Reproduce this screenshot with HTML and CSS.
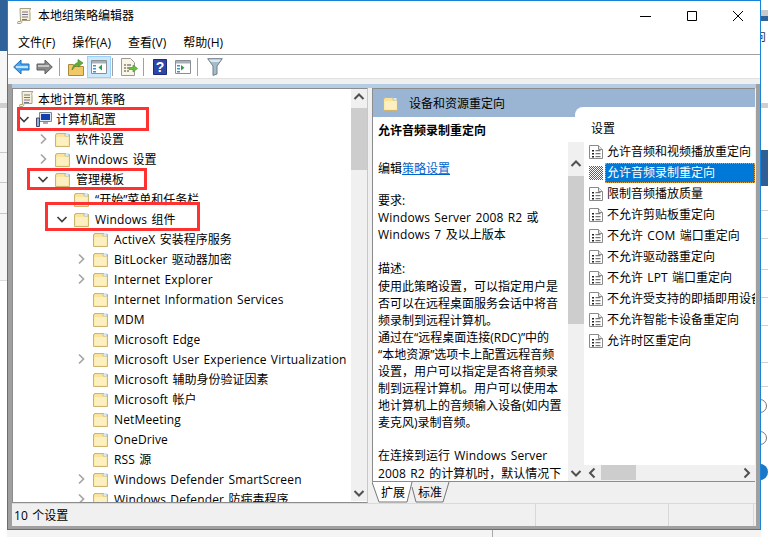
FILE: index.html
```html
<!DOCTYPE html>
<html lang="zh-CN">
<head>
<meta charset="utf-8">
<title>本地组策略编辑器</title>
<link rel="stylesheet" href="styles.css">
</head>
<body>
<svg class="defs" width="0" height="0" aria-hidden="true">
  <defs>
    <pattern id="dither" width="2" height="2" patternUnits="userSpaceOnUse">
      <rect width="2" height="2" fill="#fff"/>
      <rect width="1" height="1" fill="#0078d7"/>
      <rect x="1" y="1" width="1" height="1" fill="#0078d7"/>
    </pattern>
    <symbol id="folder" viewBox="0 0 15 15">
      <path d="M.5 2.500h1v-1h9l1 1h3v12H.5z" fill="#fbe39a" stroke="#cdb56f"/>
      <path d="M1.500 5h12v8.500h-12z" fill="#fdf0c0"/>
      <path d="M10 2h4v2h-4z" fill="#fff" stroke="#7fb0d6" stroke-width=".6"/>
    </symbol>
    <symbol id="open" viewBox="0 0 12 12"><path d="M1.500 4 6 8.500 10.500 4" fill="none" stroke="#404040" stroke-width="1.700"/></symbol>
    <symbol id="closed" viewBox="0 0 12 12"><path d="M4 1.500 8.500 6 4 10.500" fill="none" stroke="#a6a6a6" stroke-width="1.700"/></symbol>
    <symbol id="page" viewBox="0 0 14 14">
      <path d="M.5.500h9l4 4v9H.5z" fill="#fff" stroke="#8a8a8a"/>
      <path d="M9.500.500v4h4" fill="#e8e8e8" stroke="#8a8a8a"/>
      <path d="M3 5h2v1.500H3zM3 8h2v1.500H3zM3 11h2v1.500H3z" fill="#222"/>
      <path d="M6.500 5.700h5M6.500 8.700h5M6.500 11.700h5" stroke="#555"/>
    </symbol>
    <symbol id="scroll" viewBox="0 0 15 16">
      <path d="M3 .5h11c-1.500 1-1.500 2.500-1 4v8H5c0 2-1 3-1.500 3H1c-1 0-1-1.500 0-2h2.500z" fill="#f6efda" stroke="#a8a080"/>
      <path d="M5 4h6M5 6.500h6M5 9h6M5 11.500h5" stroke="#77758c"/>
    </symbol>
    <symbol id="panel" viewBox="0 0 16 14">
      <path d="M.5.500h15v13H.5z" fill="#fff" stroke="#8a8f94"/>
      <path d="M1 1h14v2.500H1z" fill="#a9b1b8"/>
      <path d="M2 5h3v1.500H2zM2 8h3v1.500H2zM2 11h3v1.500H2z" fill="#4b8ec8"/>
    </symbol>
  </defs>
</svg>

<div class="strip strip-left"></div>
<div class="strip strip-right"><span class="strip-glyph">向</span><i class="ring ring-a"></i><i class="ring ring-b"></i><i class="disc"></i></div>
<div class="desk-line"></div>

<main class="window">
  <header class="titlebar">
    <svg class="title-icon"><use href="#scroll"/></svg>
    <span class="title-text">本地组策略编辑器</span>
    <span class="controls">
      <svg class="ctl" viewBox="0 0 46 30"><path d="M17 15.500h11" stroke="#000"/></svg>
      <svg class="ctl" viewBox="0 0 46 30"><path d="M18.500 10.500h9v9h-9z" fill="none" stroke="#000"/></svg>
      <svg class="ctl" viewBox="0 0 46 30"><path d="M18 10l10 10M28 10 18 20" fill="none" stroke="#000"/></svg>
    </span>
  </header>

  <nav class="menubar">
    <span>文件(F)</span><span>操作(A)</span><span>查看(V)</span><span>帮助(H)</span>
  </nav>

  <div class="toolbar">
    <svg class="tool tool-arrow" viewBox="0 0 17 16"><path d="M.7 8 8 1v4h8v6H8v4z" fill="#4aa6ee" stroke="#1f6fb8"/><path d="M3 8h12" stroke="#bfe3ff" stroke-width="2"/></svg>
    <svg class="tool tool-arrow" viewBox="0 0 17 16"><path d="M16.300 8 9 1v4H1v6h8v4z" fill="#8a8a8a" stroke="#5e5e5e"/><path d="M2 7h11" stroke="#c5c5c5" stroke-width="2"/></svg>
    <i class="sep"></i>
    <svg class="tool tool-up" viewBox="0 0 16 18"><path d="M.5 6.500h5l1 2h9v9H.5z" fill="#f0c868" stroke="#a98a3a"/><path d="M4 12C5 7 8 5 10 4.500V1.500L15 5l-5 4V7C8 7.500 6 9 4 12z" fill="#5fae3a" stroke="#3c7f23" stroke-width=".6"/></svg>
    <span class="tool-active"><svg class="tool-panel" viewBox="0 0 16 14"><use href="#panel"/><path d="M11 4.500v6L7.500 7.500z" fill="#2f9e44"/></svg></span>
    <i class="sep"></i>
    <svg class="tool tool-export" viewBox="0 0 17 18"><path d="M.5.500h9l4 4v13H.5z" fill="#faf6e6" stroke="#999"/><path d="M3 7h2M3 10h2M3 13h2M6 7h4M6 10h2M6 13h2" stroke="#444"/><path d="M8 9.500h4V7l4.500 3.500L12 14v-2.500H8z" fill="#66c23a" stroke="#3f8f20" stroke-width=".6"/></svg>
    <i class="sep"></i>
    <svg class="tool tool-help" viewBox="0 0 14 16"><path d="M.5.500h13v15H.5z" fill="#2c47a8" stroke="#1b2c74"/><text x="7" y="13" class="help-q">?</text></svg>
    <svg class="tool tool-panel2" viewBox="0 0 16 14"><use href="#panel"/><path d="M6 5v5.500L9.500 7.700z" fill="#2f9e44"/></svg>
    <i class="sep sep-last"></i>
    <svg class="tool tool-filter" viewBox="0 0 16 18"><path d="M.7.700h14.600L10 8v8l-4 1.400V8z" fill="#a7bcc9" stroke="#6d7f8a"/><path d="M2 1.500h12L12 4H4z" fill="#dde7ed"/></svg>
  </div>

  <div class="gapbar"></div>

  <div class="client">
    <div class="blue-band"></div>
    <div class="panes">
      <section class="tree">
        <div class="tree-rows">
          <div class="row d0"><svg class="ic-root"><use href="#scroll"/></svg><span>本地计算机 策略</span></div>
          <div class="row d1"><svg class="arr"><use href="#open"/></svg><svg class="ic-pc" viewBox="0 0 16 15"><path d="M3.500.500h12v9h-12z" fill="#dfe6ee" stroke="#7d8794"/><path d="M5 2h9v6H5z" fill="#123fb0"/><path d="M7 10h5v2H7z" fill="#aab"/><path d="M.5 6h3v8.500h-3z" fill="#8fb4dc" stroke="#446"/></svg><span>计算机配置</span></div>
          <div class="row d2"><svg class="arr"><use href="#closed"/></svg><svg class="fold"><use href="#folder"/></svg><span>软件设置</span></div>
          <div class="row d2"><svg class="arr"><use href="#closed"/></svg><svg class="fold"><use href="#folder"/></svg><span><b class="lat">Windows </b>设置</span></div>
          <div class="row d2"><svg class="arr"><use href="#open"/></svg><svg class="fold"><use href="#folder"/></svg><span>管理模板</span></div>
          <div class="row d3"><i class="arr"></i><svg class="fold"><use href="#folder"/></svg><span>“开始”菜单和任务栏</span></div>
          <div class="row d3"><svg class="arr"><use href="#open"/></svg><svg class="fold"><use href="#folder"/></svg><span><b class="lat">Windows </b>组件</span></div>
          <div class="row d4"><i class="arr"></i><svg class="fold"><use href="#folder"/></svg><span><b class="lat">ActiveX </b>安装程序服务</span></div>
          <div class="row d4"><svg class="arr"><use href="#closed"/></svg><svg class="fold"><use href="#folder"/></svg><span><b class="lat">BitLocker </b>驱动器加密</span></div>
          <div class="row d4"><svg class="arr"><use href="#closed"/></svg><svg class="fold"><use href="#folder"/></svg><span class="lat">Internet Explorer</span></div>
          <div class="row d4"><i class="arr"></i><svg class="fold"><use href="#folder"/></svg><span class="lat">Internet Information Services</span></div>
          <div class="row d4"><i class="arr"></i><svg class="fold"><use href="#folder"/></svg><span class="lat">MDM</span></div>
          <div class="row d4"><i class="arr"></i><svg class="fold"><use href="#folder"/></svg><span class="lat">Microsoft Edge</span></div>
          <div class="row d4"><svg class="arr"><use href="#closed"/></svg><svg class="fold"><use href="#folder"/></svg><span class="lat">Microsoft User Experience Virtualization</span></div>
          <div class="row d4"><i class="arr"></i><svg class="fold"><use href="#folder"/></svg><span><b class="lat">Microsoft </b>辅助身份验证因素</span></div>
          <div class="row d4"><i class="arr"></i><svg class="fold"><use href="#folder"/></svg><span><b class="lat">Microsoft </b>帐户</span></div>
          <div class="row d4"><i class="arr"></i><svg class="fold"><use href="#folder"/></svg><span class="lat">NetMeeting</span></div>
          <div class="row d4"><i class="arr"></i><svg class="fold"><use href="#folder"/></svg><span class="lat">OneDrive</span></div>
          <div class="row d4"><i class="arr"></i><svg class="fold"><use href="#folder"/></svg><span><b class="lat">RSS </b>源</span></div>
          <div class="row d4"><svg class="arr"><use href="#closed"/></svg><svg class="fold"><use href="#folder"/></svg><span class="lat">Windows Defender SmartScreen</span></div>
          <div class="row d4"><svg class="arr"><use href="#closed"/></svg><svg class="fold"><use href="#folder"/></svg><span><b class="lat">Windows Defender </b>防病毒程序</span></div>
        </div>
        <div class="vscroll tree-scroll">
          <svg class="sb-arrow" viewBox="0 0 16 16"><path d="M3.500 10 8 5.500 12.500 10" fill="none" stroke="#505050" stroke-width="2"/></svg>
          <div class="sb-track"><div class="sb-thumb tree-thumb"></div></div>
          <svg class="sb-arrow" viewBox="0 0 16 16"><path d="M3.500 6 8 10.500 12.500 6" fill="none" stroke="#505050" stroke-width="2"/></svg>
        </div>
      </section>

      <section class="detail">
        <div class="view">
          <div class="band"><svg class="fold"><use href="#folder"/></svg><span>设备和资源重定向</span></div>
          <div class="view-body">
            <article class="desc">
              <p class="desc-title">允许音频录制重定向</p>
              <p class="desc-edit">编辑<a class="link">策略设置</a></p>
              <p class="desc-req">要求:<br><b class="lat">Windows Server 2008 R2 </b>或<br><b class="lat">Windows 7 </b>及以上版本</p>
              <p class="desc-main">描述:<br>使用此策略设置，可以指定用户是<br>否可以在远程桌面服务会话中将音<br>频录制到远程计算机。<br>通过在“远程桌面连接(RDC)”中的<br>“本地资源”选项卡上配置远程音频<br>设置，用户可以指定是否将音频录<br>制到远程计算机。用户可以使用本<br>地计算机上的音频输入设备(如内置<br>麦克风)录制音频。</p>
              <p class="desc-more">在连接到运行<b class="lat"> Windows Server</b><br><b class="lat">2008 R2 </b>的计算机时，默认情况下</p>
            </article>
            <div class="vscroll desc-scroll">
              <svg class="sb-arrow sb-arrow-tall" viewBox="0 0 16 34"><path d="M3.500 24 8 19.500 12.500 24" fill="none" stroke="#505050" stroke-width="2"/></svg>
              <div class="sb-track"><div class="sb-thumb desc-thumb"></div></div>
              <svg class="sb-arrow" viewBox="0 0 16 16"><path d="M3.500 6 8 10.500 12.500 6" fill="none" stroke="#505050" stroke-width="2"/></svg>
            </div>
            <div class="list">
              <div class="list-head">设置</div>
              <div class="list-rows">
                <div class="item"><svg class="page"><use href="#page"/></svg><span>允许音频和视频播放重定向</span></div>
                <div class="item item-on"><svg class="page" viewBox="0 0 14 14"><rect width="14" height="14" fill="url(#dither)"/></svg><span>允许音频录制重定向</span></div>
                <div class="item"><svg class="page"><use href="#page"/></svg><span>限制音频播放质量</span></div>
                <div class="item"><svg class="page"><use href="#page"/></svg><span>不允许剪贴板重定向</span></div>
                <div class="item"><svg class="page"><use href="#page"/></svg><span>不允许<b class="lat"> COM </b>端口重定向</span></div>
                <div class="item"><svg class="page"><use href="#page"/></svg><span>不允许驱动器重定向</span></div>
                <div class="item"><svg class="page"><use href="#page"/></svg><span>不允许<b class="lat"> LPT </b>端口重定向</span></div>
                <div class="item"><svg class="page"><use href="#page"/></svg><span>不允许受支持的即插即用设备重定向</span></div>
                <div class="item"><svg class="page"><use href="#page"/></svg><span>不允许智能卡设备重定向</span></div>
                <div class="item"><svg class="page"><use href="#page"/></svg><span>允许时区重定向</span></div>
              </div>
              <div class="hscroll">
                <svg class="sb-arrow-h" viewBox="0 0 17 16"><path d="M10.500 3.500 6 8l4.500 4.500" fill="none" stroke="#505050" stroke-width="2"/></svg>
                <div class="h-track"><div class="h-thumb"></div></div>
                <svg class="sb-arrow-h" viewBox="0 0 17 16"><path d="M6.500 3.500 11 8l-4.500 4.500" fill="none" stroke="#505050" stroke-width="2"/></svg>
              </div>
            </div>
          </div>
        </div>
        <div class="tabs">
          <svg class="tab-shape" viewBox="0 0 80 21"><path d="M0 0 7 20H35L40 0" fill="#fff" stroke="#777"/><path d="M40 5 44 20H71L77 0" fill="#f0f0f0" stroke="#777"/></svg>
          <span class="tab tab-a">扩展</span><span class="tab tab-b">标准</span>
        </div>
      </section>
    </div>
    <footer class="status">
      <span class="st st-main"><b class="lat">10 </b>个设置</span><span class="st st-b"></span><span class="st st-c"></span>
    </footer>
  </div>
</main>

<div class="redbox box-a"></div>
<div class="redbox box-b"></div>
<div class="redbox box-c"></div>
</body>
</html>
```

FILE: styles.css
```css
* { box-sizing: border-box; }
html, body { margin: 0; width: 768px; height: 537px; overflow: hidden; }
body {
  position: relative;
  background: #f4f4f4;
  font: 12px/20px "Open Sans", "Noto Sans CJK SC", sans-serif;
  color: #000;
}
p { margin: 0; }
svg { display: block; flex: none; }
i { display: block; flex: none; }
.defs { position: absolute; }
.lat { font-weight: 400; letter-spacing: .15px; word-spacing: 1px; }

/* desktop behind the window */
.strip { position: absolute; top: 0; height: 537px; width: 7px; overflow: hidden; }
.strip-left {
  left: 0;
  background: linear-gradient(#f6f6f6, #f6f6f6) 0 51px / 100% 230px no-repeat,
    linear-gradient(#2f6299, #2f6299) 0 0 / 100% 51px no-repeat, #fff;
}
.strip-left::before {
  content: "";
  display: block;
  height: 281px;
  background:
    linear-gradient(#cfcfcf, #cfcfcf) 0 103px / 100% 5px no-repeat,
    linear-gradient(#c8c8c8, #c8c8c8) 0 152px / 100% 1px no-repeat,
    linear-gradient(#c8c8c8, #c8c8c8) 0 182px / 100% 1px no-repeat,
    linear-gradient(#c8c8c8, #c8c8c8) 0 213px / 100% 1px no-repeat,
    linear-gradient(#dcdcdc, #dcdcdc) 0 280px / 100% 1px no-repeat;
}
.strip-right {
  left: 761px;
  background:
    linear-gradient(#2f5f95, #2f5f95) 0 150px / 100% 36px no-repeat,
    linear-gradient(#cfcfcf, #cfcfcf) 0 103px / 100% 5px no-repeat,
    linear-gradient(#2f6299, #2f6299) 0 16px / 100% 5px no-repeat,
    linear-gradient(#c9c9c9, #c9c9c9) 0 10px / 100% 6px no-repeat,
    linear-gradient(#d0d0d0, #d0d0d0) 0 210px / 100% 1px no-repeat,
    linear-gradient(#d0d0d0, #d0d0d0) 0 238px / 100% 1px no-repeat,
    linear-gradient(#d0d0d0, #d0d0d0) 0 269px / 100% 1px no-repeat,
    linear-gradient(#d0d0d0, #d0d0d0) 0 297px / 100% 1px no-repeat,
    linear-gradient(#d0d0d0, #d0d0d0) 0 325px / 100% 1px no-repeat,
    linear-gradient(#d0d0d0, #d0d0d0) 0 362px / 100% 1px no-repeat,
    linear-gradient(#d0d0d0, #d0d0d0) 0 386px / 100% 1px no-repeat,
    #fff;
}
.strip-glyph { position: absolute; left: -7px; top: 27px; color: #333; }
.ring { position: absolute; left: -8px; width: 14px; height: 14px; border: 1px solid #777; border-radius: 50%; }
.ring-a { top: 399px; }
.ring-b { top: 431px; }
.disc { position: absolute; left: -9px; top: 464px; width: 16px; height: 16px; border-radius: 50%; background: #1b78c8; }
.desk-line { position: absolute; left: 492px; top: 530px; width: 1px; height: 7px; background: #a8a8a8; }

/* window */
.window {
  position: absolute;
  left: 7px;
  top: 0;
  width: 754px;
  height: 530px;
  border: 1px solid #1883d7;
  background: #fff;
  display: flex;
  flex-direction: column;
}
.titlebar { height: 29px; display: flex; align-items: center; flex: none; padding-left: 9px; }
.title-icon { width: 15px; height: 16px; margin-right: 6px; }
.title-text { flex: 1; }
.controls { display: flex; height: 29px; margin-right: -1px; }
.ctl { width: 46px; height: 30px; }

.menubar {
  height: 25px;
  flex: none;
  display: flex;
  gap: 17px;
  padding: 1px 0 0 10px;
  align-items: center;
  border-bottom: 1px solid #a0a0a0;
}

.toolbar {
  height: 24px;
  flex: none;
  display: flex;
  align-items: center;
  padding-left: 5px;
  border-bottom: 1px solid #e0e0e0;
}
.tool-arrow { width: 17px; height: 16px; margin-right: 6px; }
.sep { width: 1px; height: 18px; background: #a0a0a0; margin: 0 8px 0 0; }
.tool-up { width: 16px; height: 18px; margin-right: 3px; }
.tool-active {
  width: 24px;
  height: 22px;
  background: #cce8ff;
  border: 1px solid #99d1ff;
  display: flex;
  align-items: center;
  justify-content: center;
  margin-right: 1px;
}
.tool-panel { width: 16px; height: 14px; }
.tool-export { width: 17px; height: 18px; margin-right: 5px; }
.tool-help { width: 14px; height: 16px; margin: 0 8px 0 1px; }
.help-q { font: bold 14px "Liberation Sans", sans-serif; fill: #fff; text-anchor: middle; }
.tool-panel2 { width: 16px; height: 14px; margin-right: 6px; }
.sep-last { margin-right: 9px; }
.tool-filter { width: 16px; height: 18px; }

.gapbar { height: 5px; flex: none; background: #f0f0f0; }

.client {
  flex: 1;
  min-height: 0;
  background: #f0f0f0;
  display: flex;
  flex-direction: column;
  border: solid #a0a0a0;
  border-width: 0 4px 4px 4px;
}
.blue-band { height: 4px; flex: none; background: #b4cce4; }
.panes { height: 415px; flex: none; display: flex; gap: 4px; }

/* tree */
.tree {
  width: 356px;
  flex: none;
  display: flex;
  background: #fff;
  border: 1px solid #8c8c8c;
  border-color: #8c8c8c #c8c8c8 #8c8c8c #8c8c8c;
}
.tree-rows { flex: 1; min-width: 0; overflow: hidden; }
.row { height: 20px; display: flex; align-items: center; white-space: nowrap; }
.row span { padding-top: 2px; }
.arr { width: 12px; height: 12px; margin-right: 6px; }
.fold { width: 15px; height: 15px; margin-right: 6px; }
.d0 { padding-left: 6px; }
.d1 { padding-left: 5px; }
.d2 { padding-left: 24px; }
.d3 { padding-left: 43px; }
.d4 { padding-left: 62px; }
.ic-root { width: 15px; height: 16px; margin-right: 4px; }
.ic-pc { width: 16px; height: 15px; margin-right: 4px; }

.vscroll { width: 16px; flex: none; background: #f0f0f0; display: flex; flex-direction: column; }
.sb-arrow { width: 16px; height: 16px; }
.sb-arrow-tall { height: 34px; }
.sb-track { flex: 1; min-height: 0; }
.sb-thumb { background: #cdcdcd; }
.tree-scroll { height: 412px; }
.tree-thumb { height: 62px; margin-top: 3px; }
.desc-thumb { height: 148px; }

/* right pane */
.detail { flex: 1; min-width: 0; display: flex; flex-direction: column; }
.view {
  height: 394px;
  flex: none;
  background: #fff;
  border: solid #8c8c8c;
  border-width: 1px 0 1px 1px;
  display: flex;
  flex-direction: column;
  margin-right: 1px;
}
.band {
  height: 28px;
  flex: none;
  background: #9ab5d3;
  display: flex;
  align-items: center;
  padding-left: 10px;
}
.band span { padding-top: 2px; }
.band .fold { margin-right: 11px; }
.view-body { flex: 1; min-height: 0; display: flex; }
.desc {
  width: 195px;
  flex: none;
  padding: 5px 0 0 5px;
  line-height: 17.100px;
  overflow: hidden;
  white-space: nowrap;
}
.desc-title { font-weight: 700; }
.desc-edit { margin-top: 21px; }
.link { color: #0066cc; text-decoration: underline; }
.desc-req { margin-top: 15px; }
.desc-main { margin-top: 17px; }
.desc-more { margin-top: 16px; }
.desc-scroll { margin-top: 25px; position: relative; z-index: 1; }

.list {
  width: 180px;
  flex: none;
  margin: -10px 0 0 -9px;
  padding-left: 9px;
  background: #fff;
  border-top-left-radius: 8px;
  display: flex;
  flex-direction: column;
  overflow: hidden;
}
.list-head { height: 34px; flex: none; padding: 12px 0 0 7px; line-height: 20px; }
.list-rows { flex: 1; min-height: 0; padding-left: 5px; }
.item { height: 21px; display: flex; align-items: center; white-space: nowrap; overflow: hidden; }
.page { width: 14px; height: 14px; margin-right: 4px; flex: none; }
.item-on span {
  flex: 1;
  height: 20px;
  background: #0078d7;
  color: #fff;
  outline: 1px dotted #e0a040;
  outline-offset: -1px;
  padding-left: 2px;
  margin-left: -2px;
}
.hscroll { height: 16px; flex: none; background: #f0f0f0; display: flex; }
.sb-arrow-h { width: 17px; height: 16px; }
.h-track { flex: 1; }
.h-thumb { width: 35px; height: 15px; background: #cdcdcd; }

.tabs { flex: 1; position: relative; display: flex; padding-left: 9px; align-items: center; }
.tab-shape { position: absolute; left: 0; top: 0; width: 80px; height: 21px; }
.tab { position: relative; width: 24px; white-space: nowrap; }
.tab-b { margin-left: 13px; }

/* status bar */
.status { flex: 1; display: flex; border-top: 1px solid #dadada; background: #f0f0f0; }
.st { border-right: 1px solid #d8d8d8; }
.st-main { width: 524px; padding: 2px 0 0 2px; }
.st-b { width: 133px; }
.st-c { width: 85px; }

/* annotation boxes */
.redbox { position: absolute; border: 3px solid #ff3131; pointer-events: none; }
.box-a { left: 17px; top: 107px; width: 132px; height: 24px; }
.box-b { left: 27px; top: 168px; width: 120px; height: 22px; }
.box-c { left: 45px; top: 202px; width: 155px; height: 29px; }
```
